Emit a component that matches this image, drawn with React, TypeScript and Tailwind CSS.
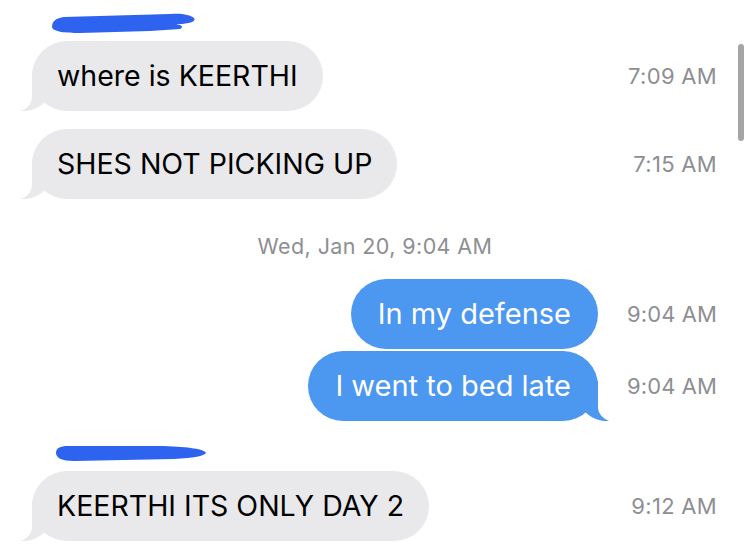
const Tail = ({ color, flip }: { color: string; flip?: boolean }) => (
  <svg
    className={
      flip
        ? "absolute right-[-12px] top-[30px] -scale-x-100"
        : "absolute left-[-12px] top-[30px]"
    }
    width="30"
    height="41"
    viewBox="-12 30 30 41"
  >
    <path
      d="M 0 30 L 0 56 C 0 62 -4 67 -11 70 C -2 70.5 6 67.5 13 61 L 13 30 Z"
      fill={color}
    />
  </svg>
);

const Time = ({ t }: { t: string }) => (
  <span className="w-[100px] shrink-0 whitespace-nowrap text-right text-[22px] tracking-[0.3px] text-[#8e8e93]">
    {t}
  </span>
);

const Incoming = ({ text, time, tail }: { text: string; time: string; tail?: boolean }) => (
  <div className="flex items-center pl-[32px] pr-[33px]">
    <div className="relative flex h-[70px] items-center whitespace-nowrap rounded-[35px] bg-[#e9e9eb] px-[25px] text-[28.5px] text-black">
      {text}
      {tail && <Tail color="#e9e9eb" />}
    </div>
    <div className="ml-auto">
      <Time t={time} />
    </div>
  </div>
);

const Outgoing = ({ text, time, tail }: { text: string; time: string; tail?: boolean }) => (
  <div className="flex items-center justify-end pr-[33px]">
    <div className="relative flex h-[70px] items-center whitespace-nowrap rounded-[35px] bg-[#4c97f0] px-[27px] text-[29px] text-white">
      {text}
      {tail && <Tail color="#4c97f0" flip />}
    </div>
    <div className="w-[29px] shrink-0" />
    <span className="w-[90px] shrink-0 whitespace-nowrap text-right text-[22px] tracking-[0.1px] text-[#8e8e93]">
      {time}
    </span>
  </div>
);

export default function App() {
  return (
    <div className="relative h-[549px] w-[750px] overflow-hidden bg-white font-['Inter',sans-serif]">
      <div className="flex flex-col pt-[12px]">
        <svg className="ml-[50px]" width="146" height="22" viewBox="0 0 146 22">
          <path
            d="M 2 15 C 2 9 6 6 14 5 L 120 2 C 132 1 140 3 144 6 C 146 9 142 11 132 12 L 126 12 C 132 13 134 15 130 17 L 100 19 L 30 21 C 16 21 3 20 2 15 Z"
            fill="#2d63ef"
          />
        </svg>
        <div className="mt-[7px]">
          <Incoming text="where is KEERTHI" time="7:09 AM" tail />
        </div>
        <div className="mt-[18px]">
          <Incoming text="SHES NOT PICKING UP" time="7:15 AM" tail />
        </div>
        <div className="mt-[35px] h-[24px] whitespace-nowrap text-center text-[21.5px] leading-[24px] tracking-[0.4px] text-[#8e8e93]">
          Wed, Jan 20, 9:04 AM
        </div>
        <div className="mt-[21px]">
          <Outgoing text="In my defense" time="9:04 AM" />
        </div>
        <div className="mt-[2px]">
          <Outgoing text="I went to bed late" time="9:04 AM" tail />
        </div>
        <svg className="ml-[54px] mt-[23px]" width="154" height="19" viewBox="0 0 154 19">
          <path
            d="M 2 9 C 2 4 6 2 14 2 L 110 2 C 135 3 150 5 152 9 C 150 12 140 14 120 15 L 20 17 C 8 17 2 14 2 9 Z"
            fill="#2d63ef"
          />
        </svg>
        <div className="mt-[8px]">
          <Incoming text="KEERTHI ITS ONLY DAY 2" time="9:12 AM" tail />
        </div>
      </div>
      <div className="absolute left-[738px] top-[44px] h-[97px] w-[6px] rounded-full bg-[#a5a5a5]" />
    </div>
  );
}
